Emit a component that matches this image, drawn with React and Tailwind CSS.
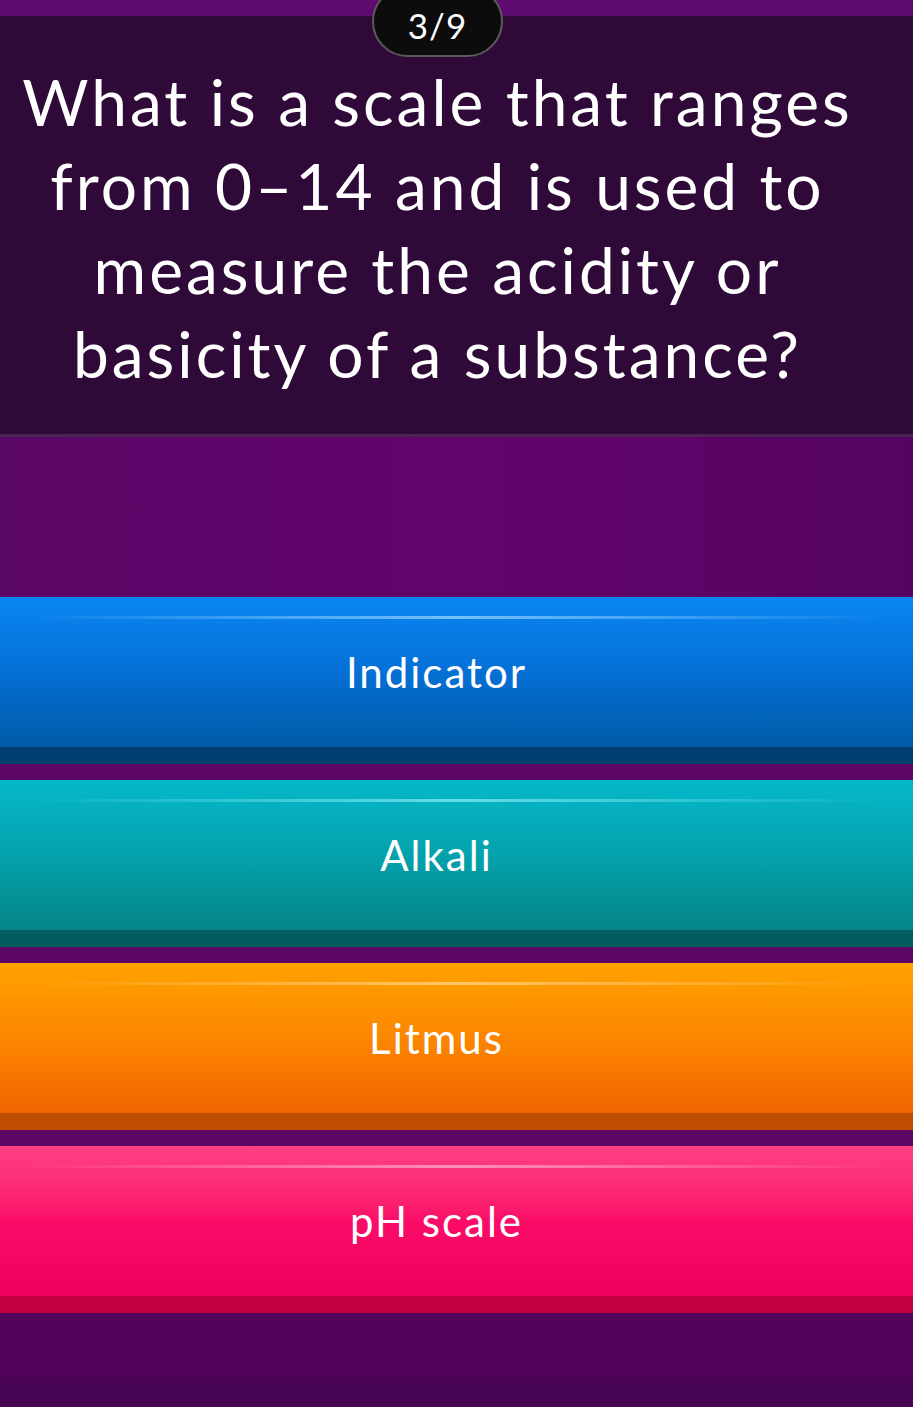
const answers = [
  {
    label: 'Indicator',
    face: 'bg-gradient-to-b from-[#0a86f2] via-[#0570d6] to-[#005aa6]',
    edge: 'bg-[#003f70]',
    shine: 'via-[#8fd0ff]',
  },
  {
    label: 'Alkali',
    face: 'bg-gradient-to-b from-[#06b8ca] via-[#04a2ac] to-[#048486]',
    edge: 'bg-[#035c60]',
    shine: 'via-[#7ae8f2]',
  },
  {
    label: 'Litmus',
    face: 'bg-gradient-to-b from-[#ffa200] via-[#fc8600] to-[#f06400]',
    edge: 'bg-[#c04e02]',
    shine: 'via-[#ffd080]',
  },
  {
    label: 'pH scale',
    face: 'bg-gradient-to-b from-[#ff3f84] via-[#fa0c68] to-[#ee005c]',
    edge: 'bg-[#c2003f]',
    shine: 'via-[#ffa6c6]',
  },
];

function AnswerButton({ answer }) {
  return (
    <button className="flex h-[167px] w-full flex-col text-white">
      <div className={`relative flex h-[150px] w-full items-center justify-center pr-[40px] ${answer.face}`}>
        <div className={`absolute left-[30px] right-[30px] top-[19px] h-[3px] bg-gradient-to-r from-transparent ${answer.shine} to-transparent opacity-80`} />
        <span className="text-[42px] leading-none tracking-[2px]">{answer.label}</span>
      </div>
      <div className={`h-[17px] w-full ${answer.edge}`} />
    </button>
  );
}

export default function App() {
  return (
    <div className="flex h-[1407px] w-[913px] flex-col overflow-hidden bg-[#5c0666] font-['Lato','Open_Sans',sans-serif]">
      <div className="relative h-[16px] bg-[#5e0a6e]">
        <div className="absolute left-[372px] top-[-14px] z-10 flex h-[71px] w-[131px] items-end justify-center rounded-full border-2 border-[#5a5a5a] bg-[#0c0c0c] pb-[12px] text-[35px] leading-none tracking-[1px] text-white">
          3/9
        </div>
      </div>

      <header className="flex h-[421px] flex-col items-center justify-center border-b-[3px] border-[#4a2356] bg-[#2f0937] pr-[38px] pt-[6px]">
        <h1 className="whitespace-nowrap text-center text-[64px] leading-[84px] tracking-[3px] text-white">
          What is a scale that ranges
          <br />
          from 0–14 and is used to
          <br />
          measure the acidity or
          <br />
          basicity of a substance?
        </h1>
      </header>

      <div className="h-[160px] bg-gradient-to-r from-[#5a0666] via-[#62046c] to-[#560462]" />

      <div className="flex flex-col gap-[16px]">
        {answers.map((answer) => (
          <AnswerButton key={answer.label} answer={answer} />
        ))}
      </div>

      <div className="flex flex-1 flex-col">
        <div className="flex-1 bg-[#52045c]" />
        <div className="h-[30px] bg-[#470452]" />
      </div>
    </div>
  );
}
